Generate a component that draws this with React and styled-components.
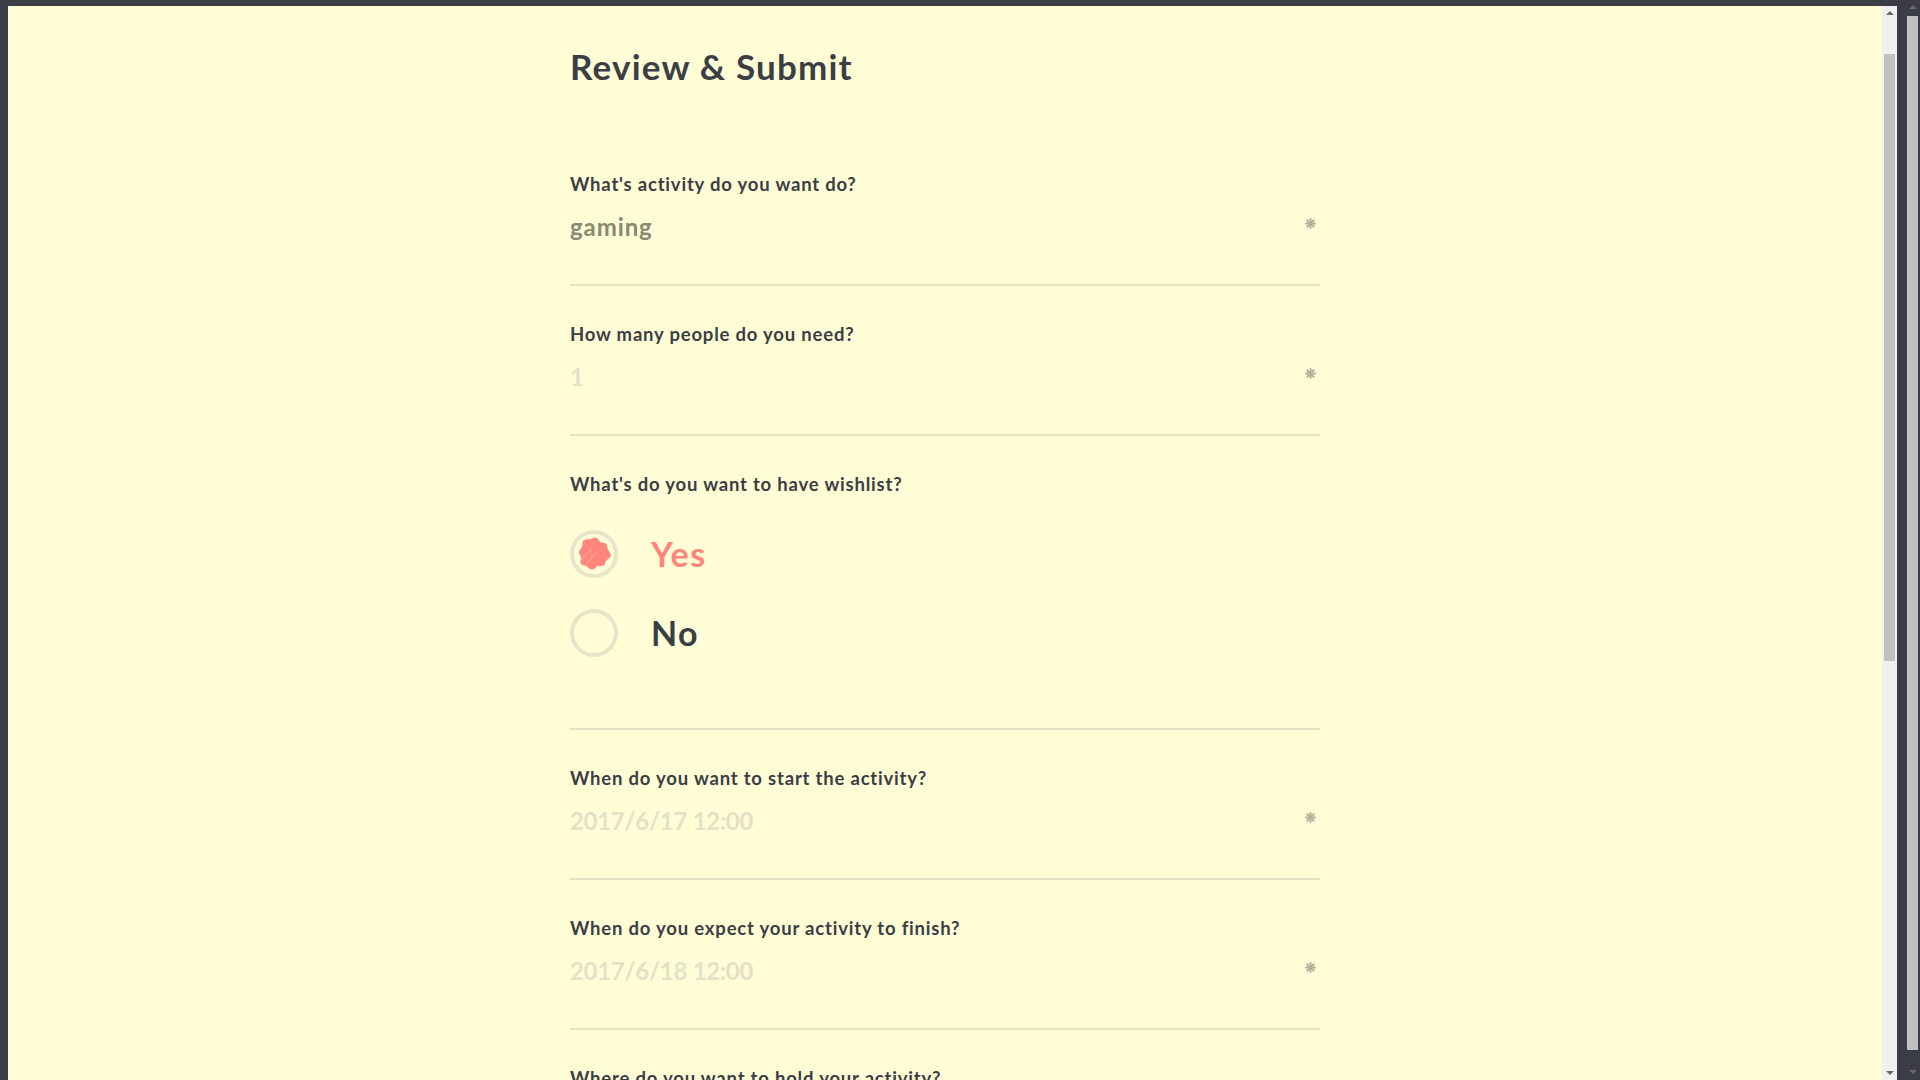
import React from 'react';
import styled, { createGlobalStyle } from 'styled-components';

const colors = {
    frame: '#3a3d46',
    paper: '#fffdd6',
    ink: '#3b3e45',
    value: '#8a8972',
    placeholder: '#e4e2c4',
    rule: '#e4e2c6',
    ring: '#e7e5c8',
    coral: '#ff867b',
    star: '#b4b29a',
    track: '#f0f0f0',
    thumb: '#c1c1c1',
    arrow: '#6a6a6a'
};

const GlobalStyle = createGlobalStyle`
    html, body {
        margin: 0;
        padding: 0;
        background: ${colors.frame};
        overflow: hidden;
    }
    * {
        box-sizing: border-box;
    }
`;

const Page = styled.div`
    display: flex;
    height: 100vh;
    background: ${colors.frame};
`;

const Frame = styled.div`
    flex: 1;
    display: flex;
    min-width: 0;
    padding: 6px 8px 0;
`;

const Panel = styled.div`
    flex: 1;
    min-width: 0;
    overflow: hidden;
    background: ${colors.paper};
    font-family: Lato, 'Open Sans', sans-serif;
    color: ${colors.ink};
`;

const ScrollBar = styled.div`
    width: 15px;
    flex-shrink: 0;
    display: flex;
    flex-direction: column;
    align-items: center;
    background: ${props => props.track};
`;

const ArrowButton = styled.div`
    height: ${props => props.size}px;
    width: 100%;
    display: flex;
    align-items: center;
    justify-content: center;
    flex-shrink: 0;

    &::after {
        content: '';
        border-left: 4px solid transparent;
        border-right: 4px solid transparent;
        ${props => (props.down ? 'border-top' : 'border-bottom')}: 4px solid ${colors.arrow};
    }
`;

const Thumb = styled.div`
    width: 11px;
    height: ${props => props.length}px;
    margin-top: ${props => props.offset}px;
    background: ${colors.thumb};
    flex-shrink: 0;
`;

const Spacer = styled.div`
    flex: 1;
`;

const Column = styled.div`
    width: 750px;
    margin: 0 auto;
    padding: 40px 0 250px;
`;

const Title = styled.h1`
    margin: 0 0 50px;
    font-size: 35px;
    line-height: 40px;
    font-weight: 700;
    letter-spacing: 1.2px;
`;

const Field = styled.div`
    padding: 36px 0 ${props => props.bottom || 41}px;
    border-bottom: 2px solid ${colors.rule};
`;

const Label = styled.div`
    font-size: 18.5px;
    line-height: 24px;
    font-weight: 700;
    letter-spacing: 0.8px;
`;

const ValueRow = styled.div`
    display: flex;
    justify-content: space-between;
    align-items: center;
    margin-top: 15px;
    padding-right: 4px;
`;

const Value = styled.div`
    font-size: 24px;
    line-height: 32px;
    font-weight: 700;
    letter-spacing: ${props => (props.tight ? '-0.3px' : '0.9px')};
    color: ${props => (props.filled ? colors.value : colors.placeholder)};
`;

const Star = styled.svg`
    margin-bottom: 7px;
    flex-shrink: 0;
`;

const RadioList = styled.div`
    display: flex;
    flex-direction: column;
    gap: 31px;
    margin-top: 34px;
`;

const RadioItem = styled.label`
    display: flex;
    align-items: center;
    gap: 33px;
    cursor: pointer;
`;

const Ring = styled.span`
    width: 48px;
    height: 48px;
    border-radius: 50%;
    border: 4px solid ${colors.ring};
    display: flex;
    align-items: center;
    justify-content: center;
    flex-shrink: 0;
`;

const RadioText = styled.span`
    font-size: 34px;
    line-height: 40px;
    font-weight: 700;
    letter-spacing: 1.4px;
    color: ${props => (props.checked ? colors.coral : colors.ink)};
`;

const SubmitRow = styled.div`
    display: flex;
    justify-content: center;
    margin-top: 80px;
`;

const SubmitButton = styled.button`
    height: 60px;
    padding: 0 70px;
    border: 2px solid ${colors.coral};
    border-radius: 30px;
    background: transparent;
    color: ${colors.coral};
    font-family: Lato, sans-serif;
    font-size: 20px;
    font-weight: 700;
    text-transform: uppercase;
    letter-spacing: 1px;
`;

const Required = () => (
    <Star width="11" height="11" viewBox="0 0 11 11">
        <g stroke={colors.star} strokeWidth="2" strokeLinecap="round">
            <line x1="5.5" y1="1" x2="5.5" y2="10" />
            <line x1="1" y1="5.5" x2="10" y2="5.5" />
            <line x1="2.3" y1="2.3" x2="8.7" y2="8.7" />
            <line x1="8.7" y1="2.3" x2="2.3" y2="8.7" />
        </g>
    </Star>
);

// scribbled fill for the checked radio
function scribblePath() {
    const cx = 17;
    const cy = 16.5;
    const pts = [];
    const n = 96;
    for (let i = 0; i < n; i++) {
        const t = (i / n) * Math.PI * 2;
        const r = 15 + 1.0 * Math.sin(t * 8 + 0.6) + 0.9 * Math.sin(t * 3 + 1.3);
        pts.push([cx + r * Math.cos(t), cy + r * Math.sin(t)]);
    }
    return 'M' + pts.map(p => p[0].toFixed(2) + ' ' + p[1].toFixed(2)).join(' L') + ' Z';
}

const Scribble = () => (
    <svg width="36" height="36" viewBox="-1 -1 36 36">
        <path d={scribblePath()} fill={colors.coral} />
        <g stroke={colors.paper} strokeWidth="0.9" strokeLinecap="round" opacity="0.5">
            <path d="M4 23 L14 12" />
            <path d="M8 29 L20 15" />
        </g>
    </svg>
);

const TextField = ({ label, value, placeholder, tight }) => (
    <Field>
        <Label>{label}</Label>
        <ValueRow>
            <Value filled={!!value} tight={tight}>{value || placeholder}</Value>
            <Required />
        </ValueRow>
    </Field>
);

const wishlistOptions = [
    { id: 'yes', text: 'Yes', checked: true },
    { id: 'no', text: 'No', checked: false }
];

export default function App() {
    return (
        <Page>
            <GlobalStyle />
            <Frame>
                <Panel>
                    <Column>
                        <Title>Review &amp; Submit</Title>
                        <TextField label="What's activity do you want do?" value="gaming" />
                        <TextField label="How many people do you need?" placeholder="1" />
                        <Field bottom={71}>
                            <Label>What's do you want to have wishlist?</Label>
                            <RadioList>
                                {wishlistOptions.map(opt => (
                                    <RadioItem key={opt.id}>
                                        <Ring>{opt.checked && <Scribble />}</Ring>
                                        <RadioText checked={opt.checked}>{opt.text}</RadioText>
                                    </RadioItem>
                                ))}
                            </RadioList>
                        </Field>
                        <TextField label="When do you want to start the activity?" placeholder="2017/6/17 12:00" tight />
                        <TextField label="When do you expect your activity to finish?" placeholder="2017/6/18 12:00" tight />
                        <TextField label="Where do you want to hold your activity?" placeholder="Taipei" />
                        <TextField label="How much does it cost per person?" placeholder="0" />
                        <TextField label="Anything else people should know?" placeholder="Description" />
                        <SubmitRow>
                            <SubmitButton>Submit</SubmitButton>
                        </SubmitRow>
                    </Column>
                </Panel>
                <ScrollBar track={colors.track}>
                    <ArrowButton size={14} />
                    <Thumb offset={34} length={607} />
                    <Spacer />
                    <ArrowButton size={14} down />
                </ScrollBar>
            </Frame>
            <ScrollBar track={colors.frame}>
                <ArrowButton size={14} />
                <Thumb offset={2} length={1034} />
                <Spacer />
                <ArrowButton size={16} down />
            </ScrollBar>
        </Page>
    );
}
